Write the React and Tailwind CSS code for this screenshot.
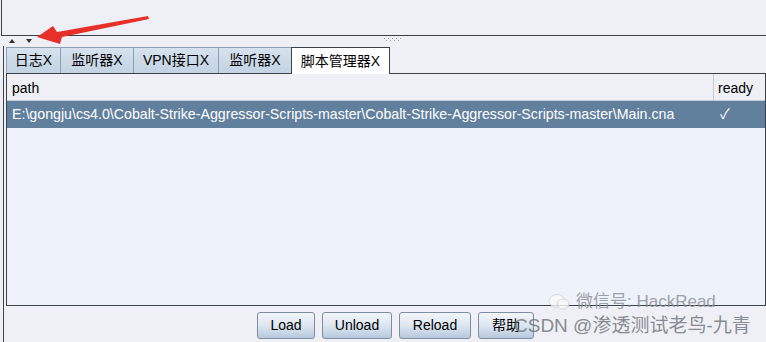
import React from "react";

const tabs = [
  { label: "日志X", w: "w-[54px]" },
  { label: "监听器X", w: "w-[73px]" },
  { label: "VPN接口X", w: "w-[85px]" },
  { label: "监听器X", w: "w-[73px]" },
];

function Btn({ children, w }) {
  return (
    <div
      className={`${w} h-[27px] flex items-center justify-center rounded-[3px] border border-[#7d8ea3] bg-gradient-to-b from-[#f3f6fb] via-[#dde6f1] to-[#b7c9dc] text-[14px] text-black`}
    >
      {children}
    </div>
  );
}

export default function App() {
  return (
    <div
      className="relative w-[766px] h-[342px] overflow-hidden bg-[#eef0f5] text-black"
      style={{ fontFamily: '"Liberation Sans", Arial, "Noto Sans CJK SC", sans-serif' }}
    >
      {/* top panel */}
      <div className="ml-[1px] h-[36px] border-l border-b border-[#3d4148] bg-[#eff0f6]" />

      {/* splitter */}
      <div className="relative h-[10px]">
        <svg className="absolute left-[9px] top-[2px]" width="26" height="6" viewBox="0 0 26 6">
          <polygon points="0,5 3,1 6,5" fill="#333" />
          <polygon points="17,1 23,1 20,5" fill="#333" />
        </svg>
        <svg className="absolute left-[384px] top-[2px]" width="17" height="4" viewBox="0 0 17 4">
          {[0, 4, 8, 12, 16].map((x) => (
            <rect key={"a" + x} x={x} y="0" width="1" height="1" fill="#9aa" />
          ))}
          {[2, 6, 10, 14].map((x) => (
            <rect key={"b" + x} x={x} y="2" width="1" height="1" fill="#9aa" />
          ))}
        </svg>
      </div>

      {/* main area */}
      <div className="ml-[3px] h-[296px] border-l border-[#3d4148] flex flex-col">
        {/* tabs */}
        <div className="flex items-end pl-[2px] h-[27px]">
          {tabs.map((t, i) => (
            <div
              key={i}
              className={`${t.w} h-[26px] flex items-center justify-center border-t border-l border-[#8e9fb1] bg-gradient-to-b from-[#d6e2ee] to-[#c3d3e3] text-[14px]`}
            >
              {t.label}
            </div>
          ))}
          <div className="w-[99px] h-[27px] flex items-center justify-center border-t border-l border-r border-[#3d4148] bg-white text-[14px] relative top-[1px] z-10">
            脚本管理器X
          </div>
        </div>

        {/* content panel */}
        <div className="ml-[2px] h-[233px] border border-[#3d4148] bg-[#eef2fa] flex flex-col">
          <div className="flex h-[27px] border-b border-[#c9cfd8] bg-[#eff0f5] text-[14px]">
            <div className="w-[707px] flex items-center pl-[5px] pt-[3px] border-r border-[#c4c9d2]">path</div>
            <div className="flex-1 flex items-center pl-[4px] pt-[3px]">ready</div>
          </div>
          <div className="flex h-[27px] bg-[#61809e] text-white text-[14.2px]">
            <div className="w-[707px] flex items-center pl-[5px] whitespace-nowrap overflow-hidden">
              E:\gongju\cs4.0\Cobalt-Strike-Aggressor-Scripts-master\Cobalt-Strike-Aggressor-Scripts-master\Main.cna
            </div>
            <div className="flex-1 flex items-center pl-[6px]">✓</div>
          </div>
        </div>

        {/* buttons */}
        <div className="flex gap-[7px] pl-[253px] pt-[6px]">
          <Btn w="w-[58px]">Load</Btn>
          <Btn w="w-[70px]">Unload</Btn>
          <Btn w="w-[72px]">Reload</Btn>
          <Btn w="w-[56px]">帮助</Btn>
        </div>
      </div>

      {/* red arrow annotation */}
      <svg className="absolute left-0 top-0" width="160" height="50" viewBox="0 0 160 50">
        <polygon points="148,16 149,19 62,37 60,44 37,37 53,26 57,32" fill="#e8302b" />
      </svg>

      {/* watermark */}
      <div className="absolute left-[548px] top-[289px] flex items-center gap-[6px] text-[17px] text-[#8a8d94] opacity-80">
        <svg width="22" height="18" viewBox="0 0 22 18">
          <ellipse cx="9" cy="8" rx="8" ry="6.5" fill="#fafafa" stroke="#cfd2d6" />
          <ellipse cx="15" cy="11" rx="6" ry="5" fill="#fafafa" stroke="#cfd2d6" />
        </svg>
        <span>微信号: HackRead</span>
      </div>
      <div className="absolute left-[514px] top-[312px] text-[19px] text-[#6f737a] opacity-80 whitespace-nowrap">
        CSDN @渗透测试老鸟-九青
      </div>
    </div>
  );
}
